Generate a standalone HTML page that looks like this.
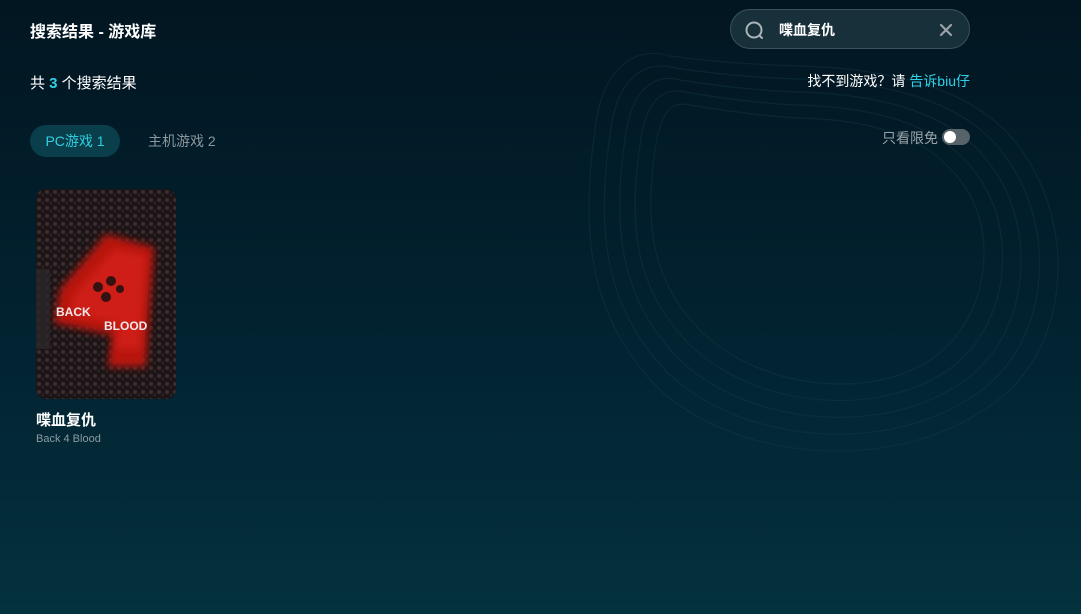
<!DOCTYPE html>
<html><head><meta charset="utf-8"><style>
*{margin:0;padding:0;box-sizing:border-box}
body{width:1081px;height:614px;overflow:hidden;position:relative;font-family:"Liberation Sans","Noto Sans CJK SC",sans-serif;
background:linear-gradient(180deg,#021621 0%,#02202e 45%,#032a38 80%,#04323f 100%);}
.abs{position:absolute}
.t{color:#fff;font-size:16px;font-weight:bold;left:30px;top:18px}
.cnt{color:#fff;font-size:15px;left:30px;top:72px}
.cnt b{color:#2fd0e6}
.tab1{left:30px;top:125px;width:90px;height:32px;border-radius:16px;background:#0a3e4a;color:#2fcfe2;font-size:14px;line-height:32px;text-align:center}
.tab2{left:148px;top:125px;height:32px;line-height:32px;color:#8a979c;font-size:14px}
.search{left:730px;top:9px;width:240px;height:40px;border-radius:20px;background:#17303a;border:1px solid #3a525b}
.search .q{color:#fff;font-size:14px;font-weight:bold;position:absolute;left:48px;top:10px}
.hint{right:111px;top:71px;color:#fff;font-size:14px}
.hint span{color:#2fd0e6}
.free{left:882px;top:128px;color:#9aa4a8;font-size:14px}
.tog{left:942px;top:129px;width:28px;height:16px;border-radius:8px;background:#566469}
.tog i{position:absolute;left:2px;top:2px;width:12px;height:12px;border-radius:50%;background:#fff}
.cover{left:36px;top:189px;width:140px;height:210px;border-radius:10px;overflow:hidden;background:#1a1214}
.name{left:36px;top:409px;color:#fff;font-size:15px;font-weight:bold}
.sub{left:36px;top:433px;color:#8d9ca1;font-size:11px}
</style></head><body>
<svg class="abs" style="left:0;top:0" width="1081" height="614">
<g fill="none" stroke="#1b4450" stroke-width="1.2" opacity="0.3">
<path d="M690 105 C670 100 660 115 655 150 C645 220 650 280 700 330 C760 390 870 400 930 360 C990 320 1000 230 960 180 C930 140 880 120 800 118 C760 116 720 110 690 105Z"/>
<path d="M685 92 C660 86 645 105 640 145 C628 225 635 290 690 345 C755 408 875 418 945 372 C1010 330 1020 230 975 172 C942 128 885 108 800 105 C760 104 720 98 685 92Z"/>
<path d="M680 80 C650 72 630 95 625 140 C612 228 620 300 680 360 C750 426 880 436 958 385 C1030 340 1040 230 990 164 C955 116 890 95 800 92 C760 91 718 86 680 80Z"/>
<path d="M675 68 C640 58 615 85 610 135 C596 232 605 310 670 375 C745 444 885 454 970 398 C1050 350 1060 230 1005 156 C968 104 895 82 800 79 C760 78 716 74 675 68Z"/>
<path d="M670 56 C630 44 600 75 595 130 C580 236 590 320 660 390 C740 462 890 472 982 411 C1070 360 1080 230 1020 148 C980 92 900 69 800 66 C760 65 714 62 670 56Z"/>
</g></svg>
<div class="abs t">搜索结果 - 游戏库</div>
<div class="abs cnt">共 <b>3</b> 个搜索结果</div>
<div class="abs tab1">PC游戏 1</div>
<div class="abs tab2">主机游戏 2</div>
<div class="abs search">
<svg class="abs" style="left:13px;top:10px" width="22" height="22" viewBox="0 0 22 22"><circle cx="10" cy="10" r="7.5" fill="none" stroke="#aab4b8" stroke-width="2"/><path d="M16 16 L18 18" stroke="#aab4b8" stroke-width="2" stroke-linecap="round"/></svg>
<span class="q">喋血复仇</span>
<svg class="abs" style="left:208px;top:13px" width="14" height="14" viewBox="0 0 14 14"><path d="M2 2L12 12M12 2L2 12" stroke="#9aa4a8" stroke-width="2.2" stroke-linecap="round"/></svg>
</div>
<div class="abs hint">找不到游戏？请 <span>告诉biu仔</span></div>
<div class="abs free">只看限免</div>
<div class="abs tog"><i></i></div>
<div class="abs cover">
<svg width="140" height="210" viewBox="0 0 140 210">
<defs><filter id="b"><feGaussianBlur stdDeviation="4"/></filter>
<pattern id="p" width="8" height="8" patternUnits="userSpaceOnUse"><rect width="8" height="8" fill="#1c1416"/><circle cx="3" cy="3" r="2" fill="#3a2e2e"/><circle cx="7" cy="6" r="1.5" fill="#2a2224"/></pattern></defs>
<rect width="140" height="210" fill="url(#p)"/>
<polygon points="70,45 118,58 110,178 72,178 76,146 18,134 24,100" fill="#b8120c" filter="url(#b)"/>
<polygon points="78,60 110,66 104,160 80,160 82,134 34,126 38,106" fill="#d8201a" opacity="0.7" filter="url(#b)"/>
<rect x="0" y="80" width="14" height="80" fill="#2a2628" opacity="0.8"/>
<g fill="#1a1012" opacity="0.85"><circle cx="62" cy="98" r="5"/><circle cx="75" cy="92" r="5"/><circle cx="70" cy="108" r="5"/><circle cx="84" cy="100" r="4"/></g>
<text x="20" y="127" font-family="Liberation Sans" font-weight="bold" font-size="12" fill="#f2eaea">BACK</text>
<text x="68" y="141" font-family="Liberation Sans" font-weight="bold" font-size="12" fill="#f2eaea">BLOOD</text>
</svg></div>
<div class="abs name">喋血复仇</div>
<div class="abs sub">Back 4 Blood</div>
</body></html>
